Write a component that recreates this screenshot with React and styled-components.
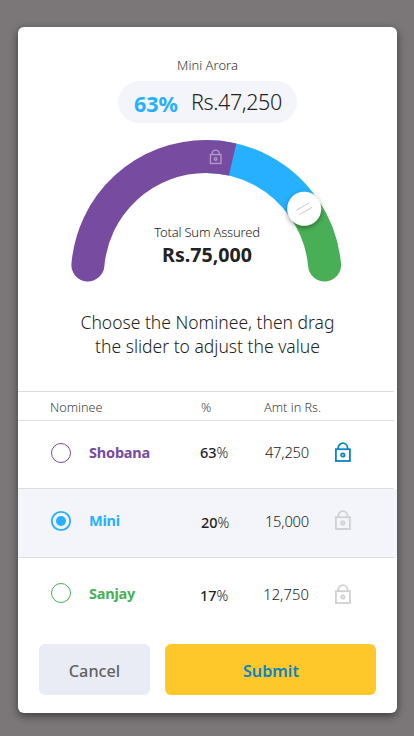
import React from "react";
import styled, { createGlobalStyle } from "styled-components";

const GlobalStyle = createGlobalStyle`
  * { box-sizing: border-box; }
  body {
    margin: 0;
    background: #7b7778;
    font-family: "Noto Sans", "Open Sans", sans-serif;
    color: #222;
  }
`;

const Page = styled.main`
  width: 414px;
  height: 736px;
  padding: 27px 17px 23px 18px;
  overflow: hidden;
`;

const Card = styled.section`
  display: flex;
  flex-direction: column;
  width: 379px;
  height: 686px;
  background: #fff;
  border-radius: 6px;
  box-shadow: 0 3px 8px rgba(0, 0, 0, 0.5);
`;

const Summary = styled.header`
  display: flex;
  flex-direction: column;
  align-items: center;
  height: 96px;
  padding-top: 28px;
`;

const Person = styled.div`
  font-size: 13px;
  line-height: 20px;
  font-weight: 300;
  color: #333;
`;

const Pill = styled.div`
  display: flex;
  width: 179px;
  height: 42px;
  margin-top: 6px;
  padding-left: 15px;
  border-radius: 21px;
  background: #f4f5fa;
  line-height: 42px;
  white-space: nowrap;
`;

const Share = styled.strong`
  width: 58px;
  padding: 2px 0 0 1px;
  font-size: 21.5px;
  font-weight: 700;
  color: #26b0ff;
`;

const Value = styled.span`
  font-size: 21.5px;
  font-weight: 300;
  letter-spacing: -0.4px;
`;

const GaugeArea = styled.div`
  position: relative;
  height: 180px;
`;

const GaugeDrawing = styled.svg`
  display: block;
  width: 379px;
  height: 180px;
`;

const Total = styled.div`
  position: absolute;
  top: 99px;
  left: 0;
  width: 378px;
  text-align: center;
`;

const TotalLabel = styled.div`
  font-size: 13px;
  line-height: 20px;
  font-weight: 300;
  letter-spacing: -0.2px;
`;

const TotalValue = styled.div`
  font-size: 19.6px;
  line-height: 26px;
  font-weight: 700;
`;

const Hint = styled.p`
  height: 88px;
  margin: 0;
  padding-top: 7px;
  text-align: center;
  font-size: 17.5px;
  line-height: 24px;
  font-weight: 300;
  white-space: pre-line;
`;

const rule = "linear-gradient(#dcdee0, #dcdee0) left bottom / 376px 1px no-repeat";

const TableHead = styled.div`
  display: grid;
  grid-template-columns: 151px 63px 1fr;
  height: 30px;
  padding-left: 32px;
  background: ${rule}, linear-gradient(#dcdee0, #dcdee0) left top / 376px 1px no-repeat;
  font-size: 12.7px;
  line-height: 32px;
  font-weight: 300;
  color: #444;
`;

const Row = styled.div`
  display: grid;
  grid-template-columns: 39px 111px 58px 51px 25px 18px;
  align-items: start;
  height: ${(p) => p.$height}px;
  padding: ${(p) => p.$top}px 0 0 32px;
  background: ${(p) => (p.$last ? "none" : rule)};
  background-color: ${(p) => (p.$active ? "#f4f5fa" : "#fff")};
  line-height: 22px;
  white-space: nowrap;
`;

const Name = styled.span`
  margin-top: ${(p) => p.$drop}px;
  font-size: 14.5px;
  font-weight: 700;
  letter-spacing: -0.2px;
  color: ${(p) => p.$color};
`;

const Percent = styled.span`
  margin-top: ${(p) => p.$drop}px;
  padding-left: ${(p) => p.$indent}px;
  font-size: 14.5px;
  font-weight: 500;
`;

const PercentSign = styled.span`
  font-weight: 300;
`;

const Amount = styled.span`
  justify-self: end;
  margin-top: ${(p) => p.$drop}px;
  font-size: 14.7px;
  font-weight: 300;
  letter-spacing: ${(p) => p.$spacing}px;
`;

const RadioIcon = styled.svg`
  display: block;
  width: 22px;
  height: 22px;
`;

const LockIcon = styled.svg`
  grid-column: 6;
  display: block;
  width: 18px;
  height: 22px;
  margin-top: ${(p) => p.$drop}px;
`;

const Actions = styled.footer`
  display: flex;
  gap: 15px;
  padding: 0 21px;
`;

const Button = styled.button`
  width: ${(p) => (p.$primary ? 211 : 111)}px;
  height: 51px;
  padding: ${(p) => (p.$primary ? "2px 0 0 1px" : "2px 0 0")};
  border: 0;
  border-radius: 6px;
  background: ${(p) => (p.$primary ? "#ffc82a" : "#e9ecf5")};
  color: ${(p) => (p.$primary ? "#0b84c5" : "#626262")};
  font-family: inherit;
  font-size: 16.2px;
  font-weight: ${(p) => (p.$primary ? 600 : 500)};
`;

const rows = [
  { name: "Shobana", pct: 63, amt: "47,250", color: "#774ba0", height: 68, top: 21, locked: true, drops: [-1, -1, -1, 0], indent: 0, spacing: -0.2 },
  { name: "Mini", pct: 20, amt: "15,000", color: "#26b0ff", height: 69, top: 21, active: true, drops: [-1, 1, 0, 0], indent: 1, spacing: -0.2 },
  { name: "Sanjay", pct: 17, amt: "12,750", color: "#49af56", height: 86, top: 24, last: true, drops: [0, 2, 1, 2], indent: 0, spacing: 0.1 },
];

function Radio({ color, checked }) {
  return (
    <RadioIcon viewBox="0 0 22 22" fill="none">
      <circle cx="11" cy="11" r={checked ? 9.2 : 9.5} stroke={color} strokeWidth={checked ? 1.8 : 1} />
      {checked && <circle cx="11" cy="11" r="5" fill={color} />}
    </RadioIcon>
  );
}

function LockShape() {
  return (
    <>
      <rect x="1.9" y="7.2" width="14" height="11.8" />
      <path d="M4.2 7V5.8a4.65 4.65 0 0 1 9.3 0V7" />
      <circle cx="8.8" cy="13" r="1.7" />
    </>
  );
}

function Gauge() {
  return (
    <GaugeArea>
      <GaugeDrawing viewBox="18 123 379 180" fill="none">
        <defs>
          <filter id="knob" x="-50%" y="-50%" width="200%" height="200%">
            <feDropShadow dx="0" dy="2" stdDeviation="2.8" floodOpacity="0.4" />
          </filter>
        </defs>
        <g strokeWidth="33">
          <path d="M87.9 265A118.5 118.5 0 0 1 206 156.5" stroke="#774ba0" strokeLinecap="round" />
          <path d="M324.6 265A118.5 118.5 0 0 0 304.5 209" stroke="#49af56" strokeLinecap="round" />
          <path d="M206 156.5A118.5 118.5 0 0 1 304.5 209.1" stroke="#26b0ff" />
          <path d="M205 156.5A118.5 118.5 0 0 1 232.6 159.5" stroke="#774ba0" />
        </g>
        <g transform="translate(209 149.2) scale(.75)" stroke="#b39acb" strokeWidth="1.8">
          <LockShape />
        </g>
        <circle cx="304.2" cy="208.8" r="17" fill="#fff" filter="url(#knob)" />
        <path d="M296.4 210.2L309.3 202.8M299.1 214.8L312 207.4" stroke="#c9c9c9" />
      </GaugeDrawing>
      <Total>
        <TotalLabel>Total Sum Assured</TotalLabel>
        <TotalValue>Rs.75,000</TotalValue>
      </Total>
    </GaugeArea>
  );
}

export default function App() {
  return (
    <Page>
      <GlobalStyle />
      <Card>
        <Summary>
          <Person>Mini Arora</Person>
          <Pill>
            <Share>63%</Share>
            <Value>Rs.47,250</Value>
          </Pill>
        </Summary>
        <Gauge />
        <Hint>{"Choose the Nominee, then drag\nthe slider to adjust the value"}</Hint>
        <TableHead>
          <span>Nominee</span>
          <span>%</span>
          <span>Amt in Rs.</span>
        </TableHead>
        {rows.map((r) => (
          <Row key={r.name} $height={r.height} $top={r.top} $active={r.active} $last={r.last}>
            <Radio color={r.color} checked={r.active} />
            <Name $color={r.color} $drop={r.drops[0]}>{r.name}</Name>
            <Percent $drop={r.drops[1]} $indent={r.indent}>
              {r.pct}
              <PercentSign>%</PercentSign>
            </Percent>
            <Amount $drop={r.drops[2]} $spacing={r.spacing}>{r.amt}</Amount>
            <LockIcon
              $drop={r.drops[3]}
              viewBox="0 0 18 22"
              fill="none"
              stroke={r.locked ? "#0b84c5" : "#cfd0d2"}
              strokeWidth="1.8"
            >
              <LockShape />
            </LockIcon>
          </Row>
        ))}
        <Actions>
          <Button>Cancel</Button>
          <Button $primary>Submit</Button>
        </Actions>
      </Card>
    </Page>
  );
}
